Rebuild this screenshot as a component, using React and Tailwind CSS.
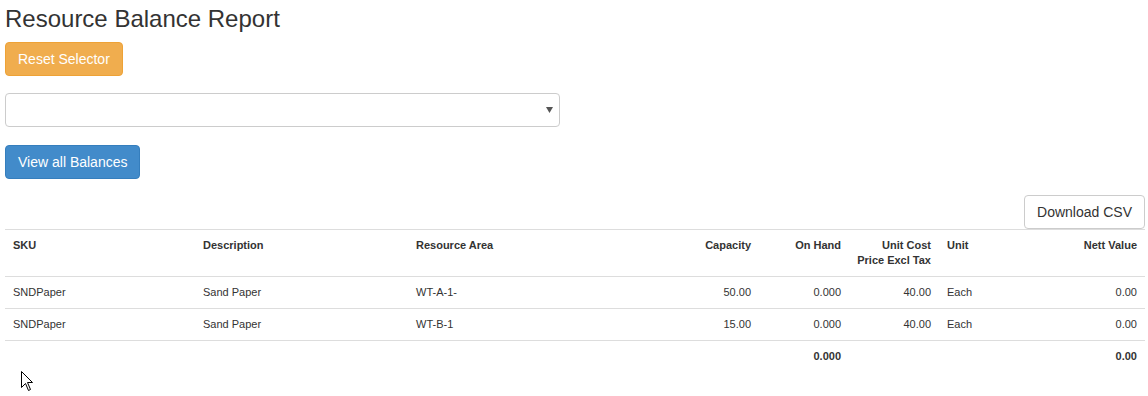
import React from 'react';

const rows = [
    { sku: 'SNDPaper', desc: 'Sand Paper', area: 'WT-A-1-', capacity: '50.00', onHand: '0.000', cost: '40.00', unit: 'Each', nett: '0.00' },
    { sku: 'SNDPaper', desc: 'Sand Paper', area: 'WT-B-1', capacity: '15.00', onHand: '0.000', cost: '40.00', unit: 'Each', nett: '0.00' },
];

const App = () => {
    return (
        <div className="relative min-h-[396px] bg-white pl-[5px] pr-[3px] font-['Liberation_Sans',Arial,sans-serif] text-[#333]">
            <h3 className="pt-[6px] text-[24px] leading-[26px] font-normal">Resource Balance Report</h3>

            <button className="block mt-[10px] h-[34px] px-3 rounded-[4px] border border-[#eea236] bg-[#f0ad4e] text-[14px] text-white">
                Reset Selector
            </button>

            <div className="relative mt-[17px] h-[34px] w-[555px] rounded-[4px] border border-[#ccc] bg-white">
                <svg className="absolute right-[6px] top-[13px]" width="7" height="6" viewBox="0 0 7 6">
                    <path d="M0 0 H7 L3.5 6 Z" fill="#555" />
                </svg>
            </div>

            <button className="block mt-[18px] h-[34px] px-3 rounded-[4px] border border-[#357ebd] bg-[#428bca] text-[14px] text-white">
                View all Balances
            </button>

            <div className="flex justify-end mt-[16px]">
                <button className="block h-[34px] px-3 rounded-[4px] border border-[#ccc] bg-white text-[14px] text-[#333]">
                    Download CSV
                </button>
            </div>

            <table className="w-[1140px] table-fixed border-collapse text-[11px] leading-[15px]">
                <colgroup>
                    <col className="w-[190px]" />
                    <col className="w-[213px]" />
                    <col className="w-[242px]" />
                    <col className="w-[109px]" />
                    <col className="w-[90px]" />
                    <col className="w-[90px]" />
                    <col className="w-[61px]" />
                    <col className="w-[145px]" />
                </colgroup>
                <thead>
                    <tr className="border-t border-b border-[#ddd] align-top font-bold">
                        <th className="p-2 text-left">SKU</th>
                        <th className="p-2 text-left">Description</th>
                        <th className="p-2 text-left">Resource Area</th>
                        <th className="p-2 text-right">Capacity</th>
                        <th className="p-2 text-right">On Hand</th>
                        <th className="p-2 text-right">Unit Cost<br />Price Excl Tax</th>
                        <th className="p-2 text-left">Unit</th>
                        <th className="p-2 text-right">Nett Value</th>
                    </tr>
                </thead>
                <tbody>
                    {rows.map((r, i) => (
                        <tr key={i} className="border-b border-[#ddd]">
                            <td className="p-2">{r.sku}</td>
                            <td className="p-2">{r.desc}</td>
                            <td className="p-2">{r.area}</td>
                            <td className="p-2 text-right">{r.capacity}</td>
                            <td className="p-2 text-right">{r.onHand}</td>
                            <td className="p-2 text-right">{r.cost}</td>
                            <td className="p-2">{r.unit}</td>
                            <td className="p-2 text-right">{r.nett}</td>
                        </tr>
                    ))}
                </tbody>
                <tfoot>
                    <tr className="font-bold">
                        <td className="p-2"></td>
                        <td className="p-2"></td>
                        <td className="p-2"></td>
                        <td className="p-2"></td>
                        <td className="p-2 text-right">0.000</td>
                        <td className="p-2"></td>
                        <td className="p-2"></td>
                        <td className="p-2 text-right">0.00</td>
                    </tr>
                </tfoot>
            </table>

            <svg className="absolute left-[21px] top-[371px]" width="13" height="21" viewBox="0 0 13 21">
                <path d="M0.5 0.5 V16.5 L4.5 12.5 L7.5 19.5 L9.5 18.5 L6.5 11.5 H11.5 Z" fill="#fff" stroke="#000" strokeWidth="1" strokeLinejoin="miter" />
            </svg>
        </div>
    );
};

export default App;
